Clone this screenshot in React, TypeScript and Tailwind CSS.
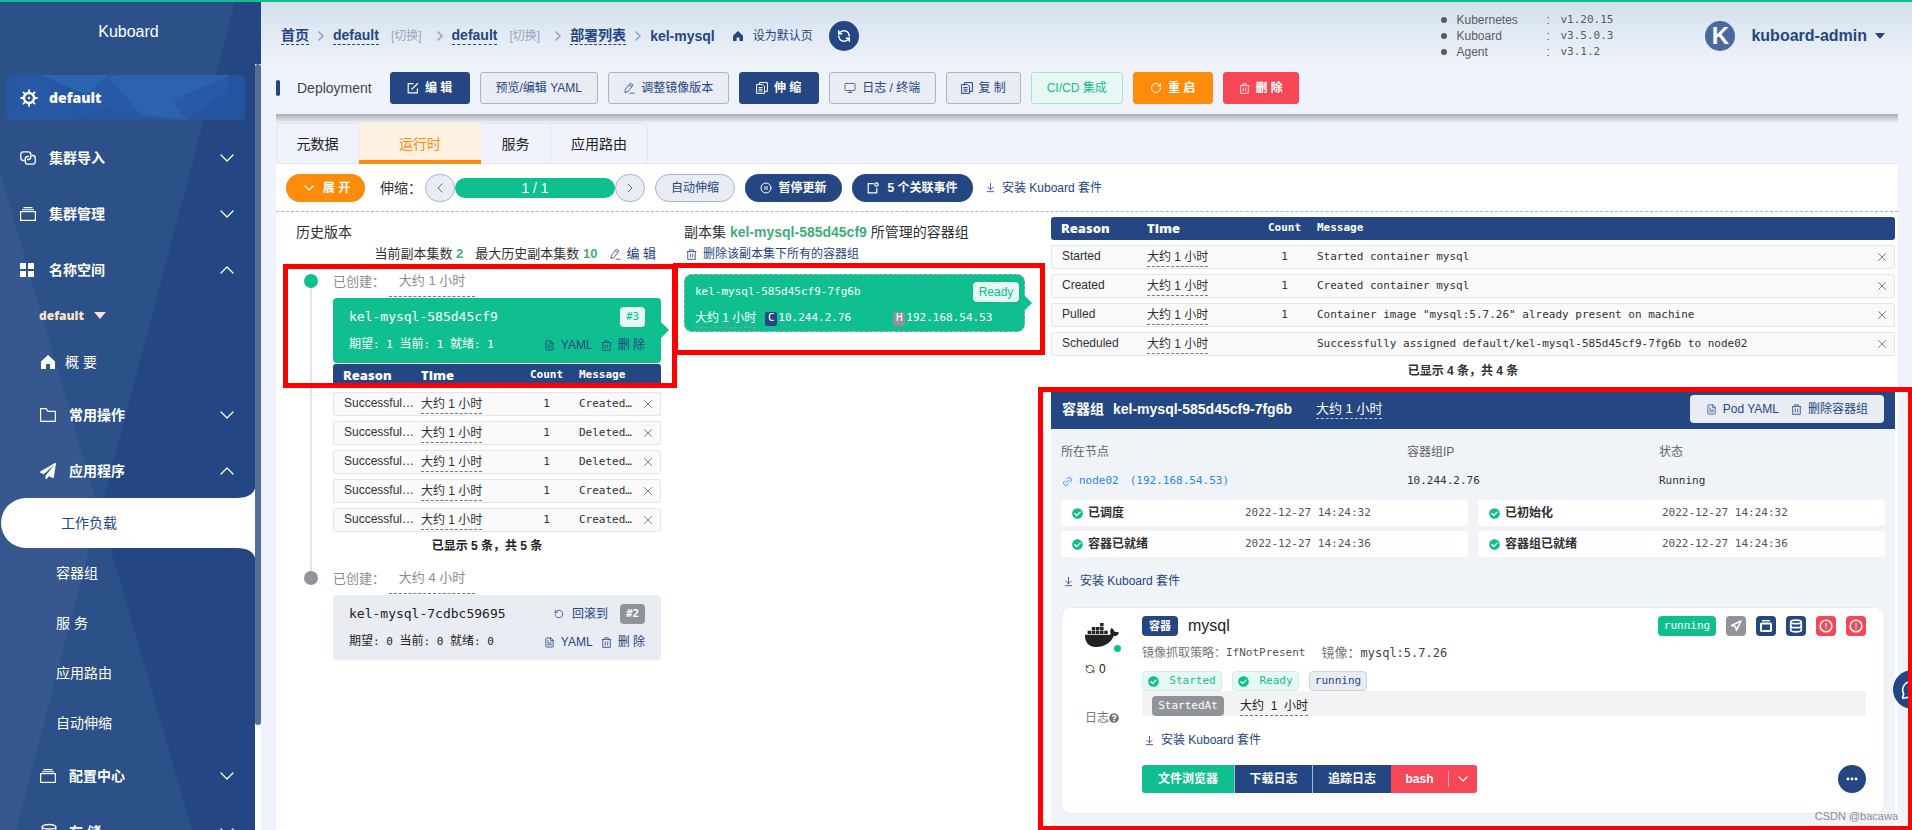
import React from "react";
import {
  ArrowDownToLine,
  ChevronDown,
  ChevronLeft,
  ChevronRight,
  ChevronUp,
  CircleAlert,
  CirclePause,
  Database,
  Ellipsis,
  FileText,
  Link2,
  MessageCircleQuestion,
  Monitor,
  Navigation,
  RefreshCcw,
  RotateCcw,
  RotateCw,
  X,
} from "lucide-react";
import { FaCheckCircle, FaDocker, FaPaperPlane, FaQuestionCircle } from "react-icons/fa";

const MONO = "font-['DejaVu_Sans_Mono','Noto_Sans_CJK_SC',monospace]";
const HEAVY = "font-['Open_Sans','Noto_Sans_CJK_SC',sans-serif] font-extrabold";

/* ---------- icons ---------- */

function WheelIcon() {
  const spokes = [0, 45, 90, 135, 180, 225, 270, 315];
  return (
    <svg viewBox="0 0 20 20" className="size-[18px]" fill="none" stroke="currentColor">
      <circle cx="10" cy="10" r="5.600" strokeWidth="2.600" />
      <circle cx="10" cy="10" r="1.400" fill="currentColor" stroke="none" />
      {spokes.map((a) => (
        <path key={a} d="M10 4.500V1.200" strokeWidth="2" strokeLinecap="round" transform={`rotate(${a} 10 10)`} />
      ))}
    </svg>
  );
}

function LinkedIcon() {
  return (
    <svg viewBox="0 0 16 14" className="h-3.5 w-4" fill="none" stroke="currentColor" strokeWidth="1.3">
      <path d="M4.500 9.500H3.200A2.500 2.500 0 0 1 .8 7V3.200A2.500 2.500 0 0 1 3.300.8h5A2.500 2.500 0 0 1 10.800 3.300V6A2.500 2.500 0 0 1 8.300 8.500H7" />
      <path d="M11.500 4.500h1.300A2.500 2.500 0 0 1 15.200 7v3.700a2.500 2.500 0 0 1-2.500 2.500h-5A2.500 2.500 0 0 1 5.200 10.700V8A2.500 2.500 0 0 1 7.700 5.500H9" />
    </svg>
  );
}

function StackIcon() {
  return (
    <svg viewBox="0 0 16 14" className="h-3.5 w-4" fill="none" stroke="currentColor">
      <path d="M3.500.6h9M2 2.700h12" strokeWidth="1.1" />
      <rect x=".6" y="4.600" width="14.800" height="8.800" strokeWidth="1.2" />
    </svg>
  );
}

function FolderIcon() {
  return (
    <svg viewBox="0 0 16 14" className="h-3.5 w-4" fill="none" stroke="currentColor" strokeWidth="1.2">
      <path d="M.6.6h5.600L8 3.400h7.400v10H.6z" />
    </svg>
  );
}

function GridIcon() {
  return (
    <svg viewBox="0 0 14 14" className="size-3.5" fill="currentColor">
      <path d="M0 0h6v6H0zM8 0h6v6H8zM0 8h6v6H0zM8 8h6v6H8z" />
    </svg>
  );
}

function HomeIcon({ className }: { className: string }) {
  return (
    <svg viewBox="0 0 14 14" className={className} fill="currentColor">
      <path d="M7 0 14 6.500V14H9V9H5v5H0V6.500z" />
    </svg>
  );
}

function DocsIcon() {
  return (
    <svg viewBox="0 0 12 12" className="size-3" fill="none" stroke="currentColor">
      <path d="M3.500 2.500V.6h7.900v8.900H9M.6 2.600h6L8.500 4.500v6.900H.6zM2.500 5.500h4M2.500 7.300h4M2.500 9.100h4" />
    </svg>
  );
}

function EditIcon() {
  return (
    <svg viewBox="0 0 12 12" className="size-3" fill="none" stroke="currentColor" strokeWidth="1.2">
      <path d="M6.500 1.600H1.200v9.200h9.200V6.500M4.500 7.500 10.900 1.200" />
    </svg>
  );
}

function PenIcon() {
  return (
    <svg viewBox="0 0 12 12" className="size-3" fill="none" stroke="currentColor" strokeWidth=".8">
      <path d="M7.300 1.200 10 3 5 9.600 2 10.500 2.300 7.600zM6.200 2.800 8.900 4.600M6.500 11.200h5" />
    </svg>
  );
}

function TrashIcon() {
  return (
    <svg viewBox="0 0 12 12" className="size-[11px]" fill="none" stroke="currentColor" strokeWidth=".9">
      <path d="M.8 2.800h10.400M4 2.500V.9h4v1.600M1.900 3v8.300h8.200V3M4.700 5v4.200M7.300 5v4.200" />
    </svg>
  );
}

function NoticeIcon() {
  return (
    <svg viewBox="0 0 12 12" className="size-3" fill="none" stroke="currentColor" strokeWidth="1.2">
      <path d="M6.500 1.600H1.200v9.200h8.600V6" />
      <circle cx="9.500" cy="2.500" r="1.700" />
    </svg>
  );
}

function Caret({ className }: { className: string }) {
  return (
    <svg viewBox="0 0 10 6" className={className} fill="currentColor">
      <path d="M0 0h10L5 6z" />
    </svg>
  );
}

function ArrowTip({ className }: { className: string }) {
  return (
    <svg viewBox="0 0 8 16" className={`absolute h-4 w-2 text-[#10bf90] ${className}`} fill="currentColor">
      <path d="M0 0 8 8 0 16z" />
    </svg>
  );
}

/* ---------- sidebar ---------- */

function MenuGroup({ icon, label, open, nested }: { icon: React.ReactNode; label: string; open?: boolean; nested?: boolean }) {
  return (
    <button
      type="button"
      className={`flex h-14 w-full shrink-0 items-center pr-4 text-left text-sm font-bold ${nested ? "pl-10" : "pl-5"}`}
    >
      <span className="flex w-[29px] shrink-0 items-center">{icon}</span>
      <span>{label}</span>
      {open ? <ChevronUp className="ml-auto size-6" strokeWidth={1.3} /> : <ChevronDown className="ml-auto size-6" strokeWidth={1.3} />}
    </button>
  );
}

function MenuLink({ label }: { label: string }) {
  return (
    <a href="#" className="flex h-[50px] shrink-0 items-center pl-14 text-sm">
      {label}
    </a>
  );
}

function Sidebar() {
  return (
    <aside className="relative flex w-[261px] shrink-0 flex-col overflow-hidden bg-[#244682] text-white">
      <svg viewBox="0 0 261 828" preserveAspectRatio="none" className="absolute inset-0 size-full">
        <path d="M0 0H235L100 510 192 828H0z" fill="#2c5088" />
        <path d="M0 170 99 510 16 828H0z" fill="#36588e" />
      </svg>
      <div className="relative flex h-[62px] shrink-0 items-center justify-center pr-1 pb-0.5 text-base">Kuboard</div>
      <div className="relative flex min-h-0 flex-1">
        <nav className="flex min-w-0 flex-1 flex-col overflow-hidden pt-[11px]">
          <a
            href="#"
            className="relative mr-2.5 mb-2.5 ml-1.5 flex h-[45px] shrink-0 items-center overflow-hidden rounded-[5px] bg-[#2456a3] pl-3.5"
          >
            <svg viewBox="0 0 239 45" preserveAspectRatio="none" className="absolute inset-0 size-full">
              <path d="M35 0H239V45H155L100 34 62 45 80 20z" fill="#2859a8" />
              <path d="M35 0H103L80 20z" fill="#2b64af" />
              <path d="M103 3 135 39 224 0H110z" fill="#2e68b2" opacity=".7" />
              <path d="M135 39 155 8 180 45z" fill="#2c62af" />
              <path d="M222 0H239V45H180L222 15z" fill="#2454a0" />
              <path d="M0 45 12 0H35L75 25 62 45z" fill="#2658a5" />
            </svg>
            <span className="relative flex w-[29px] items-center">
              <WheelIcon />
            </span>
            <span className={`relative text-sm ${HEAVY}`}>default</span>
          </a>
          <MenuGroup icon={<LinkedIcon />} label="集群导入" />
          <MenuGroup icon={<StackIcon />} label="集群管理" />
          <MenuGroup icon={<GridIcon />} label="名称空间" open />
          <button type="button" className={`flex h-[35px] shrink-0 items-center gap-2.5 pl-[39px] text-xs text-[#fde3cd] ${HEAVY}`}>
            default
            <Caret className="h-[7px] w-3" />
          </button>
          <a href="#" className="mt-1 flex h-[50px] shrink-0 items-center gap-2.5 pl-[41px] text-sm">
            <HomeIcon className="size-3.5" />
            概 要
          </a>
          <MenuGroup icon={<FolderIcon />} label="常用操作" nested />
          <MenuGroup icon={<FaPaperPlane className="size-4" />} label="应用程序" open nested />
          <div className="relative -mt-px h-[50px] shrink-0 pl-px">
            <svg viewBox="0 0 18 10" className="absolute -top-[10px] right-0 h-2.5 w-[18px]" fill="#fff">
              <path d="M18 0V10H0C10 10 17 6 18 0z" />
            </svg>
            <a href="#" className="flex h-full items-center rounded-l-full bg-white pl-[60px] text-sm text-[#244682]">
              工作负载
            </a>
            <svg viewBox="0 0 18 10" className="absolute right-0 -bottom-[10px] h-2.5 w-[18px]" fill="#fff">
              <path d="M18 10V0H0C10 0 17 4 18 10z" />
            </svg>
          </div>
          <MenuLink label="容器组" />
          <MenuLink label="服 务" />
          <MenuLink label="应用路由" />
          <MenuLink label="自动伸缩" />
          <MenuGroup icon={<StackIcon />} label="配置中心" nested />
          <MenuGroup icon={<Database className="size-[18px]" strokeWidth={1.8} />} label="存 储" nested />
        </nav>
        <div className="w-1.5 shrink-0 bg-white">
          <div className="h-[86.3%] rounded-[3px] bg-[#566d98]" />
        </div>
      </div>
    </aside>
  );
}

/* ---------- header ---------- */

function Crumb({ label }: { label: string }) {
  return (
    <a href="#" className="border-b border-dashed border-[#244682] leading-[17px] font-bold">
      {label}
    </a>
  );
}

function Sep() {
  return <ChevronRight className="size-4 shrink-0 text-[#93a3c1]" strokeWidth={2.5} />;
}

function Switch() {
  return (
    <a href="#" className="mr-1.5 ml-2 text-xs text-[#97a6c2]">
      [切换]
    </a>
  );
}

function VersionRow({ name, value }: { name: string; value: string }) {
  return (
    <li className="flex h-4 items-center">
      <span className="mr-[9px] size-1.5 rounded-full bg-[#5b5b5b]" />
      <span className="w-[90px]">{name}</span>
      <span className="w-3.5">:</span>
      <span className={`text-[11px] ${MONO}`}>{value}</span>
    </li>
  );
}

function TopBar() {
  return (
    <header className="flex h-[68px] items-center pl-[5px] text-sm text-[#244682]">
      <nav className="flex items-center gap-1">
        <Crumb label="首页" />
        <Sep />
        <Crumb label="default" />
        <Switch />
        <Sep />
        <Crumb label="default" />
        <Switch />
        <Sep />
        <Crumb label="部署列表" />
        <Sep />
        <span className="font-bold">kel-mysql</span>
      </nav>
      <a href="#" className="ml-[18px] flex items-center gap-2.5 text-xs">
        <HomeIcon className="size-2.5" />
        设为默认页
      </a>
      <button type="button" aria-label="刷新" className="ml-4 flex size-[30px] items-center justify-center rounded-full bg-[#244682] text-white">
        <RefreshCcw className="size-3.5" strokeWidth={2.5} />
      </button>
      <ul className="ml-auto text-xs text-[#5b5b5b]">
        <VersionRow name="Kubernetes" value="v1.20.15" />
        <VersionRow name="Kuboard" value="v3.5.0.3" />
        <VersionRow name="Agent" value="v3.1.2" />
      </ul>
      <button type="button" className="mr-[13px] ml-[92px] flex items-center text-base font-bold">
        <span className="mr-4 flex size-[30px] items-center justify-center rounded-full bg-[#486a9d] text-2xl text-white">K</span>
        kuboard-admin
        <Caret className="ml-2 h-1.5 w-2.5" />
      </button>
    </header>
  );
}

type Tone = "primary" | "plain" | "success" | "warning" | "danger";

const TONES: Record<Tone, string> = {
  primary: "border-[#244682] bg-[#244682] text-white font-bold",
  plain: "border-[#a7b5cd] bg-[#e9ecf3] text-[#244682]",
  success: "border-[#9fe5d2] bg-[#e7f8f3] text-[#10bf90]",
  warning: "border-[#ff8b0a] bg-[#ff8b0a] text-white font-bold",
  danger: "border-[#f64757] bg-[#f64757] text-white font-bold",
};

function Btn({ tone, icon, children, className = "" }: { tone: Tone; icon?: React.ReactNode; children: React.ReactNode; className?: string }) {
  return (
    <button
      type="button"
      className={`flex h-8 items-center justify-center gap-1.5 rounded-[3px] border text-xs whitespace-nowrap ${TONES[tone]} ${className}`}
    >
      {icon}
      {children}
    </button>
  );
}

function ActionBar() {
  return (
    <div className="flex items-center gap-2.5 pt-0.5 pb-2.5">
      <h1 className="mr-2 flex items-center text-sm text-[#42454b]">
        <span className="mr-[17px] h-4 w-1 rounded-[2px] bg-[#244682]" />
        Deployment
      </h1>
      <Btn tone="primary" className="w-20" icon={<EditIcon />}>
        编 辑
      </Btn>
      <Btn tone="plain" className="w-[118px]">
        预览/编辑 YAML
      </Btn>
      <Btn tone="plain" className="w-[121px]" icon={<PenIcon />}>
        调整镜像版本
      </Btn>
      <Btn tone="primary" className="w-20" icon={<DocsIcon />}>
        伸 缩
      </Btn>
      <Btn tone="plain" className="w-[107px]" icon={<Monitor className="size-3" strokeWidth={1.5} />}>
        日志 / 终端
      </Btn>
      <Btn tone="plain" className="w-[75px]" icon={<DocsIcon />}>
        复 制
      </Btn>
      <Btn tone="success" className="w-[92px]">
        CI/CD 集成
      </Btn>
      <Btn tone="warning" className="w-20" icon={<RotateCw className="size-3" />}>
        重 启
      </Btn>
      <Btn tone="danger" className="w-[76px]" icon={<TrashIcon />}>
        删 除
      </Btn>
    </div>
  );
}

function Tabs() {
  const tab = "flex h-[41px] items-center border-t border-r border-[#e2e5ee] text-sm text-[#222]";
  return (
    <div className="flex border-b border-[#e2e5ee]" role="tablist">
      <button type="button" role="tab" className={`${tab} -mb-px w-[83px] justify-center rounded-tl-[4px] border-l`}>
        元数据
      </button>
      <button
        type="button"
        role="tab"
        aria-selected="true"
        className="-mb-px flex h-[41px] w-[122px] items-center justify-center border-b-4 border-[#ff8b0a] bg-[#fff1e2] pt-1 text-sm text-[#ff8b0a]"
      >
        运行时
      </button>
      <button type="button" role="tab" className={`${tab} -mb-px w-[70px] justify-center`}>
        服务
      </button>
      <button type="button" role="tab" className={`${tab} -mb-px w-[97px] justify-center rounded-tr-[4px]`}>
        应用路由
      </button>
    </div>
  );
}

function InstallLink() {
  return (
    <a href="#" className="flex items-center gap-1.5 text-xs text-[#244682]">
      <ArrowDownToLine className="size-[11px]" strokeWidth={1.8} />
      安装 Kuboard 套件
    </a>
  );
}

function RuntimeBar() {
  const round = "flex h-7 w-[30px] items-center justify-center rounded-full border border-[#a7b5cd] bg-[#e9ecf3] text-[#5a6f99]";
  const pill = "flex h-7 items-center justify-center gap-1.5 rounded-full text-xs";
  return (
    <div className="flex h-12 items-center border-b border-dashed border-[#a9b4c8] pl-2.5">
      <button type="button" className={`${pill} w-[79px] bg-[#ff8b0a] font-bold text-white`}>
        <ChevronDown className="size-4" strokeWidth={1.8} />
        展 开
      </button>
      <span className="ml-[15px] w-[45px] text-sm text-[#333]">伸缩：</span>
      <button type="button" aria-label="减少" className={round}>
        <ChevronLeft className="size-4" strokeWidth={1.5} />
      </button>
      <span className="flex h-5 w-40 items-center justify-center rounded-full bg-[#10bf90] text-sm text-white">1 / 1</span>
      <button type="button" aria-label="增加" className={round}>
        <ChevronRight className="size-4" strokeWidth={1.5} />
      </button>
      <button type="button" className={`${pill} ml-2.5 w-20 border border-[#a7b5cd] bg-[#e9ecf3] text-[#244682]`}>
        自动伸缩
      </button>
      <button type="button" className={`${pill} ml-2.5 w-[97px] bg-[#244682] font-bold text-white`}>
        <CirclePause className="size-3" />
        暂停更新
      </button>
      <button type="button" className={`${pill} mr-3 ml-2.5 w-[121px] bg-[#244682] font-bold text-white`}>
        <NoticeIcon />
        <span className="ml-0.5">5 个关联事件</span>
      </button>
      <InstallLink />
    </div>
  );
}

/* ---------- events ---------- */

interface EventRow {
  reason: string;
  count: string;
  message: string;
}

function EventTable({ rows, wide }: { rows: EventRow[]; wide?: boolean }) {
  const cell = "h-6 border-y border-[#e6e6e6] bg-[#fafafa] p-0";
  return (
    <table className="w-full table-fixed border-separate border-spacing-x-0 border-spacing-y-[5px] text-left text-xs text-[#303133]">
      <colgroup>
        <col className={wide ? "w-24" : "w-[88px]"} />
        <col className={wide ? "w-[105px]" : "w-[93px]"} />
        <col className="w-[65px]" />
        <col />
        <col className="w-5" />
      </colgroup>
      <thead>
        <tr className="bg-[#244682] text-white">
          <th className={`h-[23px] rounded-l-[3px] p-0 pl-2.5 text-[13px] ${HEAVY}`}>Reason</th>
          <th className={`p-0 text-[13px] ${HEAVY}`}>Time</th>
          <th className={`p-0 text-center text-[11px] ${MONO}`}>Count</th>
          <th className={`p-0 text-[11px] ${MONO}`}>Message</th>
          <th className="rounded-r-[3px] p-0" />
        </tr>
      </thead>
      <tbody>
        {rows.map((row, i) => (
          <tr key={i}>
            <td className={`${cell} rounded-l-[3px] border-l pb-0.5 pl-2.5`}>{row.reason}</td>
            <td className={`${cell} pt-0.5`}>
              <span className="inline-block border-b border-dashed border-[#777] align-bottom leading-[17px]">大约 1 小时</span>
            </td>
            <td className={`${cell} text-center text-[11px] ${MONO}`}>{row.count}</td>
            <td className={`${cell} truncate text-[11px] ${MONO}`}>{row.message}</td>
            <td className={`${cell} rounded-r-[3px] border-r`}>
              <button type="button" aria-label="关闭" className="block text-[#5a6f99]">
                <X className="size-3.5" strokeWidth={1.5} />
              </button>
            </td>
          </tr>
        ))}
      </tbody>
    </table>
  );
}

const REPLICA_EVENTS: EventRow[] = ["Created…", "Deleted…", "Deleted…", "Created…", "Created…"].map((message) => ({
  reason: "Successful…",
  count: "1",
  message,
}));

const POD_EVENTS: EventRow[] = [
  { reason: "Started", count: "1", message: "Started container mysql" },
  { reason: "Created", count: "1", message: "Created container mysql" },
  { reason: "Pulled", count: "1", message: 'Container image "mysql:5.7.26" already present on machine' },
  { reason: "Scheduled", count: "", message: "Successfully assigned default/kel-mysql-585d45cf9-7fg6b to node02" },
];

/* ---------- history column ---------- */

function CreatedAt({ age }: { age: string }) {
  return (
    <div className="flex h-[33px] items-center text-[13px] text-[#8c8c8c]">
      <span className="w-14">已创建：</span>
      <span className="flex h-[30px] w-[86px] items-center justify-center border-b border-dashed border-[#777]">{age}</span>
    </div>
  );
}

function RevisionCard({ name, n, rev, active }: { name: string; n: number; rev: string; active?: boolean }) {
  return (
    <div className={`relative rounded-[4px] px-4 pt-[9px] ${active ? "bg-[#10bf90] text-white" : "bg-[#e9ecf3] text-[#222]"}`}>
      <div className="flex h-5 items-center">
        <span className={`text-[13px] ${MONO}`}>{name}</span>
        <span className="ml-auto flex items-center gap-3">
          {!active && (
            <a href="#" className="flex items-center gap-2 text-xs text-[#244682]">
              <RotateCcw className="size-2.5" strokeWidth={1.8} />
              回滚到
            </a>
          )}
          <span
            className={`flex h-5 w-[25px] items-center justify-center rounded-[4px] text-[11px] ${MONO} ${
              active ? "bg-[#e7f8f3] text-[#10bf90]" : "bg-[#909399] font-bold text-white"
            }`}
          >
            {rev}
          </span>
        </span>
      </div>
      <div className="flex h-9 items-center">
        <span className={`text-[11px] ${MONO}`}>
          <span className="text-xs">期望</span>: {n} <span className="text-xs">当前</span>: {n} <span className="text-xs">就绪</span>: {n}
        </span>
        <span className="ml-auto flex items-center gap-2 text-xs text-[#244682]">
          <a href="#" className="flex items-center gap-1.5">
            <FileText className="size-[11px]" strokeWidth={1.8} />
            YAML
          </a>
          <a href="#" className="flex items-center gap-1.5">
            <TrashIcon />
            删 除
          </a>
        </span>
      </div>
      {active && <ArrowTip className="top-6 -right-2" />}
    </div>
  );
}

function HistoryColumn() {
  return (
    <section className="pt-[9px] pr-[23px] pl-2.5">
      <h2 className="text-sm leading-[22px] text-[#303133]">历史版本</h2>
      <div className="flex items-center justify-end gap-3 pr-[5px] text-[13px] leading-[22px] text-[#303133]">
        <span>
          当前副本集数 <b className="text-[#3fae7c]">2</b>
        </span>
        <span>
          最大历史副本集数 <b className="text-[#3fae7c]">10</b>
        </span>
        <a href="#" className="flex items-center gap-[5px] text-[#244682]">
          <PenIcon />编 辑
        </a>
      </div>
      <ol className="pl-2">
        <li className="flex">
          <div className="flex w-3.5 flex-col items-center pt-[9px]">
            <span className="size-3.5 shrink-0 rounded-full bg-[#10bf90]" />
            <span className="w-0.5 flex-1 bg-[#e2e5ec]" />
          </div>
          <div className="min-w-0 flex-1 pl-[15px]">
            <CreatedAt age="大约 1 小时" />
            <RevisionCard name="kel-mysql-585d45cf9" n={1} rev="#3" active />
            <div className="-mt-1">
              <EventTable rows={REPLICA_EVENTS} />
            </div>
            <p className="mb-[7px] pr-5 text-center text-xs leading-[18px] font-bold text-[#222]">已显示 5 条，共 5 条</p>
          </div>
        </li>
        <li className="flex">
          <div className="flex w-3.5 flex-col items-center">
            <span className="h-[9px] w-0.5 bg-[#e2e5ec]" />
            <span className="size-3.5 shrink-0 rounded-full bg-[#909399]" />
          </div>
          <div className="min-w-0 flex-1 pl-[15px]">
            <CreatedAt age="大约 4 小时" />
            <RevisionCard name="kel-mysql-7cdbc59695" n={0} rev="#2" />
          </div>
        </li>
      </ol>
    </section>
  );
}

/* ---------- pod list column ---------- */

function PodsColumn() {
  return (
    <section className="pt-[9px] pr-[26px]">
      <h2 className="text-sm leading-[22px] text-[#303133]">
        副本集 <b className="text-[#3fae7c]">kel-mysql-585d45cf9</b> 所管理的容器组
      </h2>
      <a href="#" className="flex items-center gap-1.5 pl-0.5 text-xs leading-[22px] text-[#244682]">
        <TrashIcon />
        删除该副本集下所有的容器组
      </a>
      <div className="relative mt-[9px] h-[58px] rounded-lg border border-dashed border-[#a9b4c8] bg-[#10bf90] pr-[5px] pl-2.5 text-white">
        <div className="flex h-[34px] items-center justify-between">
          <span className={`text-[11px] ${MONO}`}>kel-mysql-585d45cf9-7fg6b</span>
          <span className="flex h-5 w-[46px] items-center justify-center rounded-[4px] bg-[#e7f8f3] text-xs text-[#10bf90]">Ready</span>
        </div>
        <div className={`flex items-center text-[11px] ${MONO}`}>
          <span className="border-b border-dashed border-[#909399] font-['Liberation_Sans','Noto_Sans_CJK_SC',sans-serif] text-xs leading-[18px]">
            大约 1 小时
          </span>
          <span className="mr-px ml-[9px] flex h-3.5 w-3 items-center justify-center rounded-[2px] bg-[#244682]">C</span>
          <span className="w-[115px]">10.244.2.76</span>
          <span className="mr-px flex h-3.5 w-3 items-center justify-center rounded-[2px] bg-[#909399]">H</span>
          <span>192.168.54.53</span>
        </div>
        <ArrowTip className="top-5 -right-2" />
      </div>
    </section>
  );
}

/* ---------- pod detail column ---------- */

function Condition({ label, time }: { label: string; time: string }) {
  return (
    <div className="flex h-[26px] items-center rounded-[4px] bg-white pl-[11px] text-xs">
      <FaCheckCircle className="mr-[5px] size-[11px] text-[#10bf90]" />
      <span className="w-[157px] font-bold text-[#303133]">{label}</span>
      <span className={`text-[11px] text-[#555] ${MONO}`}>{time}</span>
    </div>
  );
}

function Badge({ className, children }: { className: string; children: React.ReactNode }) {
  return <span className={`flex h-5 items-center justify-center rounded-[4px] text-[11px] ${className}`}>{children}</span>;
}

function ContainerCard() {
  const btn = "flex h-7 items-center justify-center text-xs font-bold text-white";
  return (
    <article className="mt-[15px] flex rounded-[10px] border border-[#e6ebf5] bg-white pt-2 pr-[18px] pb-5">
      <div className="w-20 shrink-0 pt-0.5 pl-[23px] text-[#222]">
        <span className="relative block w-9">
          <FaDocker className="size-[34px]" />
          <span className="absolute right-0 bottom-0 size-[7px] rounded-full bg-[#10bf90]" />
        </span>
        <span className="mt-[9px] flex items-center gap-1 text-xs">
          <RefreshCcw className="size-2.5" strokeWidth={1.8} />0
        </span>
        <span className="mt-[33px] flex items-center text-xs text-[#777]">
          日志
          <FaQuestionCircle className="size-2.5" />
        </span>
      </div>
      <div className="min-w-0 flex-1">
        <div className="flex h-5 items-center gap-2.5">
          <Badge className="w-9 bg-[#244682] font-bold text-white">容器</Badge>
          <span className="text-base text-[#222]">mysql</span>
          <Badge className={`ml-auto w-[58px] bg-[#10bf90] text-white ${MONO}`}>running</Badge>
          <Badge className="w-5 bg-[#909399] text-white">
            <Navigation className="size-3" strokeWidth={3} />
          </Badge>
          <Badge className="w-5 bg-[#244682] text-white">
            <svg viewBox="0 0 14 14" className="size-3.5" fill="none" stroke="currentColor">
              <path d="M3 1.700h8" strokeWidth="1.400" />
              <rect x="2" y="4.500" width="10" height="7.500" rx=".5" strokeWidth="2" />
            </svg>
          </Badge>
          <Badge className="w-5 bg-[#244682] text-white">
            <Database className="size-3.5" strokeWidth={3} />
          </Badge>
          <Badge className="w-5 bg-[#f64757] text-white">
            <CircleAlert className="size-3.5" strokeWidth={2.5} />
          </Badge>
          <Badge className="w-5 bg-[#f64757] text-white">
            <CircleAlert className="size-3.5" strokeWidth={2.5} />
          </Badge>
        </div>
        <p className="mt-[7px] flex h-5 items-center text-xs text-[#777]">
          <span className="w-21">镜像抓取策略：</span>
          <span className={`text-[11px] text-[#555] ${MONO}`}>IfNotPresent</span>
          <span className="ml-4 w-[39px] text-[13px]">镜像：</span>
          <span className={`text-xs text-[#444] ${MONO}`}>mysql:5.7.26</span>
        </p>
        <div className={`mt-2 flex gap-2.5 ${MONO}`}>
          <Badge className="w-20 gap-2.5 border border-[#cfeee5] bg-[#e7f8f3] text-[#10bf90]">
            <FaCheckCircle className="size-[11px]" />
            Started
          </Badge>
          <Badge className="w-[67px] gap-2.5 border border-[#cfeee5] bg-[#e7f8f3] text-[#10bf90]">
            <FaCheckCircle className="size-[11px]" />
            Ready
          </Badge>
          <Badge className="w-[58px] border border-[#ccd3e0] bg-[#e9ecf3] text-[#244682]">running</Badge>
        </div>
        <div className="flex h-[25px] items-end bg-[#f3f3f3] pl-2.5">
          <Badge className={`w-[72px] bg-[#909399] text-white ${MONO}`}>StartedAt</Badge>
          <span className="ml-4 border-b border-dashed border-[#777] text-xs leading-[18px] text-[#222]">大约&nbsp; 1 &nbsp;小时</span>
        </div>
        <div className="mt-3.5 flex h-5 items-center pl-0.5">
          <InstallLink />
        </div>
        <div className="mt-[15px] flex">
          <button type="button" className={`${btn} w-23 rounded-l-[3px] bg-[#10bf90]`}>
            文件浏览器
          </button>
          <button type="button" className={`${btn} w-[79px] border-x border-[#a7b5cd] bg-[#244682]`}>
            下载日志
          </button>
          <button type="button" className={`${btn} w-[78px] bg-[#244682]`}>
            追踪日志
          </button>
          <button type="button" className={`${btn} w-[57px] bg-[#f64757]`}>
            bash
          </button>
          <button type="button" aria-label="更多终端" className={`${btn} w-[29px] rounded-r-[3px] bg-[#f64757]`}>
            <span className="h-4 w-px bg-[#fbabb2]" />
            <ChevronDown className="mx-auto size-4" strokeWidth={1.8} />
          </button>
          <button type="button" aria-label="更多" className="ml-auto flex size-7 items-center justify-center rounded-full bg-[#244682] text-white">
            <Ellipsis className="size-3.5" strokeWidth={3} />
          </button>
        </div>
      </div>
    </article>
  );
}

function PodColumn() {
  return (
    <section className="flex min-w-0 flex-col">
      <EventTable rows={POD_EVENTS} wide />
      <p className="pr-5 text-center text-xs leading-5 font-bold text-[#303133]">已显示 4 条，共 4 条</p>
      <div className="mt-2 flex-1 rounded-t-[4px] bg-[#f0f3f8]">
        <header className="flex h-10 items-center rounded-t-[4px] bg-[#244682] pr-[11px] pl-[11px] text-sm text-white">
          <b>容器组</b>
          <b className="ml-[9px]">kel-mysql-585d45cf9-7fg6b</b>
          <span className="ml-6 border-b border-dashed border-[#c0c9da] text-[13px] leading-[18px]">大约 1 小时</span>
          <span className="ml-auto flex h-7 items-center gap-3 rounded-[4px] bg-[#e9ecf3] px-4 text-xs text-[#244682]">
            <a href="#" className="flex items-center gap-1.5">
              <FileText className="size-[11px]" strokeWidth={1.6} />
              Pod YAML
            </a>
            <a href="#" className="flex items-center gap-1.5">
              <TrashIcon />
              删除容器组
            </a>
          </span>
        </header>
        <div className="px-2.5 pt-3">
          <dl className="grid grid-cols-[346fr_252fr_226fr] gap-y-[7px] text-xs leading-[22px] text-[#606266]">
            <dt>所在节点</dt>
            <dt>容器组IP</dt>
            <dt>状态</dt>
            <dd className={`text-[11px] ${MONO}`}>
              <a href="#" className="flex items-center text-[#1f86f5]">
                <Link2 className="mr-1.5 ml-px size-[11px] -rotate-45" strokeWidth={1.8} />
                node02<span className="ml-[11px]">(192.168.54.53)</span>
              </a>
            </dd>
            <dd className={`text-[11px] text-[#303133] ${MONO}`}>10.244.2.76</dd>
            <dd className={`text-[11px] text-[#303133] ${MONO}`}>Running</dd>
          </dl>
          <div className="mt-2 grid grid-cols-2 gap-x-2.5 gap-y-[5px]">
            <Condition label="已调度" time="2022-12-27 14:24:32" />
            <Condition label="已初始化" time="2022-12-27 14:24:32" />
            <Condition label="容器已就绪" time="2022-12-27 14:24:36" />
            <Condition label="容器组已就绪" time="2022-12-27 14:24:36" />
          </div>
          <div className="mt-[13px] flex h-[22px] items-center pl-0.5">
            <InstallLink />
          </div>
          <ContainerCard />
        </div>
      </div>
    </section>
  );
}

export default function App() {
  return (
    <div className="relative flex h-screen flex-col overflow-hidden border-t-2 border-[#10bf90] bg-[#f0f3fb] font-['Liberation_Sans','Noto_Sans_CJK_SC',sans-serif]">
      <div className="flex min-h-0 flex-1">
        <Sidebar />
        <main className="flex min-w-0 flex-1 flex-col bg-[linear-gradient(#d3e0ed_0px,#f0f3fb_65px)] pr-3.5 pl-[15px]">
          <TopBar />
          <ActionBar />
          <div className="h-[9px] shrink-0 bg-linear-to-b from-[#a9abb0] to-[#f0f3fb]" />
          <Tabs />
          <div className="flex min-h-0 flex-1 flex-col bg-white">
            <RuntimeBar />
            <div className="grid min-h-0 flex-1 grid-cols-[398fr_367fr_844fr] pr-[3px] pl-2.5">
              <HistoryColumn />
              <PodsColumn />
              <PodColumn />
            </div>
          </div>
        </main>
      </div>

      <button
        type="button"
        aria-label="帮助"
        className="absolute top-[668px] -right-5 flex size-[39px] items-center rounded-full bg-[#244682] pl-2 text-white"
      >
        <MessageCircleQuestion className="size-5" />
      </button>
      <span className="absolute right-3.5 bottom-1.5 text-[11px] text-[#8d8d8d]">CSDN @bacawa</span>

      <div className="pointer-events-none absolute top-[262px] left-[283px] h-[124px] w-[394px] border-5 border-[#ff0000]" />
      <div className="pointer-events-none absolute top-[261px] left-[673px] h-[92px] w-[372px] border-5 border-[#ff0000]" />
      <div className="pointer-events-none absolute top-[385px] right-0 bottom-0 left-[1038px] border-4 border-t-5 border-l-5 border-[#ff0000]" />
    </div>
  );
}
